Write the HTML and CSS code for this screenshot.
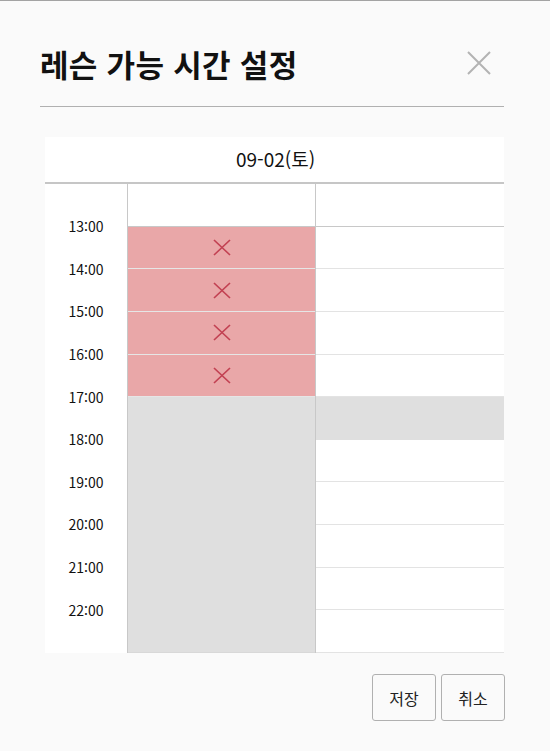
FILE: index.html
```html
<!DOCTYPE html>
<html lang="ko">
<head>
<meta charset="utf-8">
<link rel="stylesheet" href="styles.css">
</head>
<body>
<div class="dialog">
  <div class="head">
    <h1 class="title">레슨 가능 시간 설정</h1>
    <button class="close" aria-label="닫기">
      <svg width="24" height="24" viewBox="0 0 24 24"><path d="M1 1 L23 23 M23 1 L1 23" stroke="#b3b3b3" stroke-width="2" fill="none"/></svg>
    </button>
  </div>
  <div class="table">
    <div class="thead">09-02(토)</div>
    <div class="tbody">
      <div class="times">
        <div class="t">13:00</div>
        <div class="t">14:00</div>
        <div class="t">15:00</div>
        <div class="t">16:00</div>
        <div class="t">17:00</div>
        <div class="t">18:00</div>
        <div class="t">19:00</div>
        <div class="t">20:00</div>
        <div class="t">21:00</div>
        <div class="t">22:00</div>
      </div>
      <div class="col col1">
        <div class="cell first"></div>
        <div class="cell blocked"><svg width="18" height="17" viewBox="0 0 18 17"><path d="M1 1 L17 16 M17 1 L1 16" stroke="#c24152" stroke-width="1.7" fill="none"/></svg></div>
        <div class="cell blocked"><svg width="18" height="17" viewBox="0 0 18 17"><path d="M1 1 L17 16 M17 1 L1 16" stroke="#c24152" stroke-width="1.7" fill="none"/></svg></div>
        <div class="cell blocked"><svg width="18" height="17" viewBox="0 0 18 17"><path d="M1 1 L17 16 M17 1 L1 16" stroke="#c24152" stroke-width="1.7" fill="none"/></svg></div>
        <div class="cell blocked"><svg width="18" height="17" viewBox="0 0 18 17"><path d="M1 1 L17 16 M17 1 L1 16" stroke="#c24152" stroke-width="1.7" fill="none"/></svg></div>
        <div class="cell off"></div>
        <div class="cell off"></div>
        <div class="cell off"></div>
        <div class="cell off"></div>
        <div class="cell off"></div>
        <div class="cell off last"></div>
      </div>
      <div class="col col2">
        <div class="cell first"></div>
        <div class="cell"></div>
        <div class="cell"></div>
        <div class="cell"></div>
        <div class="cell"></div>
        <div class="cell off"></div>
        <div class="cell"></div>
        <div class="cell"></div>
        <div class="cell"></div>
        <div class="cell"></div>
        <div class="cell"></div>
      </div>
    </div>
  </div>
  <div class="foot">
    <button class="btn">저장</button>
    <button class="btn">취소</button>
  </div>
</div>
</body>
</html>
```

FILE: styles.css
```css
* { box-sizing: border-box; }
html, body { margin: 0; padding: 0; }
body {
  background: #fafafa;
  border-top: 1px solid #a3a3a3;
  font-family: "Noto Sans CJK KR", "Noto Sans", sans-serif;
  color: #111;
  width: 550px;
  height: 751px;
  overflow: hidden;
}
.dialog { padding: 0 46px 0 40px; }
.head {
  height: 106px;
  padding-top: 20px;
  display: flex;
  align-items: center;
  justify-content: space-between;
  border-bottom: 1px solid #b0b0b0;
}
.title {
  margin: 0;
  font-size: 31px;
  font-weight: 700;
  color: #111;
  letter-spacing: 0.3px;
}
.close {
  border: 0;
  background: none;
  padding: 0;
  width: 24px;
  height: 24px;
  margin: 0 13px 2px 0;
  display: flex;
}
.table {
  margin: 30px 0 0 5px;
  background: #fff;
}
.thead {
  height: 47px;
  border-bottom: 2px solid #c6c6c6;
  display: flex;
  align-items: center;
  justify-content: center;
  font-size: 19px;
  color: #111;
  padding: 0 0 3px 2px;
}
.tbody {
  display: flex;
  height: 469px;
}
.times {
  width: 82px;
  padding-top: 32px;
  display: flex;
  flex-direction: column;
}
.t {
  height: 42.636px;
  flex: none;
  line-height: 20px;
  font-size: 14px;
  text-align: center;
  color: #111;
}
.col {
  display: flex;
  flex-direction: column;
}
.col1 {
  width: 189px;
  border-left: 1px solid #c8c8c8;
  border-right: 1px solid #c8c8c8;
}
.col2 { flex: 1; }
.cell {
  flex: 1;
  border-bottom: 1px solid #e3e3e3;
  display: flex;
  align-items: center;
  justify-content: center;
}
.cell.first { border-bottom-color: #c8c8c8; }
.cell.blocked { background: #e9a7a8; border-bottom-color: #e6e6e6; }
.cell.off { background: #dfdfdf; border-bottom-color: #dfdfdf; }
.cell.off.last { border-bottom-color: #d8d8d8; }
.foot {
  display: flex;
  justify-content: flex-end;
  gap: 5px;
  margin: 21px -1px 0 0;
}
.btn {
  width: 64px;
  height: 47px;
  border: 1px solid #b0b0b0;
  border-radius: 3px;
  background: #fafafa;
  font-family: "Noto Sans CJK KR", sans-serif;
  font-size: 16px;
  color: #222;
  padding: 0;
}
```
